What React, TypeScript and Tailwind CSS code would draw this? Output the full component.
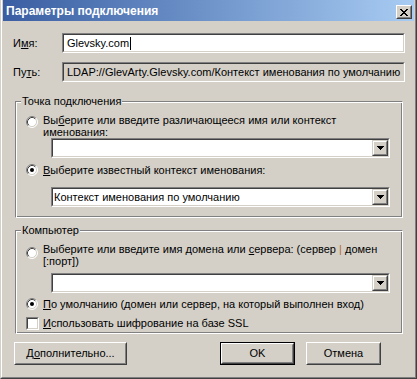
import React from "react";

function Radio({ checked }: { checked?: boolean }) {
  return (
    <svg width="12" height="12" viewBox="0 0 12 12" className="block shrink-0">
      <circle cx="6" cy="6" r="5" fill="#ffffff" />
      <path d="M2.11 9.89 A5.5 5.5 0 0 1 9.89 2.11" fill="none" stroke="#808080" />
      <path d="M9.89 2.11 A5.5 5.5 0 0 1 2.11 9.89" fill="none" stroke="#ffffff" />
      <path d="M2.82 9.18 A4.5 4.5 0 0 1 9.18 2.82" fill="none" stroke="#404040" />
      <path d="M9.18 2.82 A4.5 4.5 0 0 1 2.82 9.18" fill="none" stroke="#d4d0c8" />
      {checked && <circle cx="6" cy="6" r="2" fill="#000000" />}
    </svg>
  );
}

function Checkbox() {
  return (
    <div className="w-[13px] h-[13px] shrink-0 border border-t-[#808080] border-l-[#808080] border-r-white border-b-white">
      <div className="w-full h-full bg-white border border-t-[#404040] border-l-[#404040] border-r-[#d4d0c8] border-b-[#d4d0c8]" />
    </div>
  );
}

function Sunken({
  className,
  inner,
  children,
}: {
  className: string;
  inner: string;
  children?: React.ReactNode;
}) {
  return (
    <div className={"border border-t-[#808080] border-l-[#808080] border-r-white border-b-white " + className}>
      <div className={"w-full h-full border border-t-[#404040] border-l-[#404040] border-r-[#d4d0c8] border-b-[#d4d0c8] " + inner}>
        {children}
      </div>
    </div>
  );
}

function DropBtn() {
  return (
    <div className="w-[16px] h-[16px] shrink-0 border border-t-[#d4d0c8] border-l-[#d4d0c8] border-r-[#404040] border-b-[#404040]">
      <div className="w-full h-full bg-[#d4d0c8] border border-t-white border-l-white border-r-[#808080] border-b-[#808080] flex items-center justify-center">
        <svg width="7" height="4" viewBox="0 0 7 4" shapeRendering="crispEdges" className="block">
          <path d="M0 0h7v1H0zM1 1h5v1H1zM2 2h3v1H2zM3 3h1v1H3z" fill="#000000" />
        </svg>
      </div>
    </div>
  );
}

function Combo({ text }: { text?: string }) {
  return (
    <Sunken className="ml-[35px] w-[339px] h-[20px]" inner="bg-white flex items-center">
      <div className="flex-1 pl-[1px] whitespace-nowrap overflow-hidden">{text}</div>
      <DropBtn />
    </Sunken>
  );
}

function Group({
  label,
  className,
  children,
}: {
  label: string;
  className: string;
  children?: React.ReactNode;
}) {
  return (
    <div
      className={
        "relative ml-[12px] w-[388px] flex flex-col border border-t-[#808080] border-l-[#808080] border-r-white border-b-white shadow-[inset_1px_1px_0_#ffffff,inset_-1px_-1px_0_#808080] " +
        className
      }
    >
      <div className="absolute left-[5px] top-[-7px] bg-[#d4d0c8] px-[1px] leading-[13px] whitespace-nowrap">
        {label}
      </div>
      {children}
    </div>
  );
}

function Button({
  className,
  children,
  def,
}: {
  className: string;
  children: React.ReactNode;
  def?: boolean;
}) {
  if (def) {
    return (
      <div className={"h-[23px] border border-black " + className}>
        <div className="w-full h-full border border-t-white border-l-white border-r-[#404040] border-b-[#404040]">
          <div className="w-full h-full border border-t-[#d4d0c8] border-l-[#d4d0c8] border-r-[#808080] border-b-[#808080] flex items-center justify-center">
            {children}
          </div>
        </div>
      </div>
    );
  }
  return (
    <div className={"h-[23px] border border-t-white border-l-white border-r-[#404040] border-b-[#404040] " + className}>
      <div className="w-full h-full border border-t-[#d4d0c8] border-l-[#d4d0c8] border-r-[#808080] border-b-[#808080] flex items-center justify-center">
        {children}
      </div>
    </div>
  );
}

export default function App() {
  return (
    <div className="w-[417px] h-[379px] bg-[#d4d0c8] text-[11px] leading-[13px] text-black font-['Liberation_Sans',Arial,sans-serif]">
      <div className="w-full h-full border border-t-0 border-l-[#d4d0c8] border-r-[#404040] border-b-[#404040]">
        <div className="w-full h-full border border-t-0 border-l-white border-r-[#808080] border-b-[#808080] px-[1px] pb-[1px] flex flex-col">
          {/* Title bar */}
          <div className="h-[21px] shrink-0 flex items-start bg-linear-to-r from-[#3a5ea2] to-[#a8ccf2]">
            <div className="pl-[3px] pt-[4px] text-[12px] leading-[14px] font-bold text-white whitespace-nowrap flex-1">
              Параметры подключения
            </div>
            <div className="mt-[5px] mr-[2px] w-[16px] h-[14px] border border-t-white border-l-white border-r-[#404040] border-b-[#404040]">
              <div className="w-full h-full bg-[#d4d0c8] border border-t-[#d4d0c8] border-l-[#d4d0c8] border-r-[#808080] border-b-[#808080] flex items-center justify-center">
                <svg width="8" height="7" viewBox="0 0 8 7" shapeRendering="crispEdges" className="block">
                  <path
                    d="M0 0h2v1H0zM6 0h2v1H6zM1 1h2v1H1zM5 1h2v1H5zM2 2h4v1H2zM3 3h2v1H3zM2 4h4v1H2zM1 5h2v1H1zM5 5h2v1H5zM0 6h2v1H0zM6 6h2v1H6z"
                    fill="#000000"
                  />
                </svg>
              </div>
            </div>
          </div>

          {/* Name row */}
          <div className="mt-[12px] h-[20px] flex items-center">
            <div className="ml-[10px] w-[49px]">
              И<u>м</u>я:
            </div>
            <Sunken className="w-[343px] h-[20px]" inner="bg-white flex items-center pl-[3px]">
              <span className="whitespace-nowrap">Glevsky.com</span>
              <span className="ml-[1px] w-[1px] h-[13px] bg-black" />
            </Sunken>
          </div>

          {/* Path row */}
          <div className="mt-[9px] h-[20px] flex items-center">
            <div className="ml-[10px] w-[49px]">
              Пу<u>т</u>ь:
            </div>
            <Sunken className="w-[343px] h-[20px]" inner="bg-[#d4d0c8] flex items-center pl-[3px]">
              <span className="whitespace-nowrap">LDAP://GlevArty.Glevsky.com/Контекст именования по умолчанию</span>
            </Sunken>
          </div>

          {/* Group 1 */}
          <Group label="Точка подключения" className="mt-[19px] h-[117px]">
            <div className="mt-[12px] ml-[10px] flex items-start">
              <div className="mt-[2px]">
                <Radio />
              </div>
              <div className="ml-[5px] leading-[12px] whitespace-nowrap">
                Вы<u>б</u>ерите или введите различающееся имя или контекст
                <br />
                именования:
              </div>
            </div>
            <Combo />
            <div className="mt-[6px] ml-[10px] flex items-start">
              <Radio checked />
              <div className="ml-[5px] whitespace-nowrap">
                <u>В</u>ыберите известный контекст именования:
              </div>
            </div>
            <div className="mt-[10px]">
              <Combo text="Контекст именования по умолчанию" />
            </div>
          </Group>

          {/* Group 2 */}
          <Group label="Компьютер" className="mt-[12px] h-[104px]">
            <div className="mt-[12px] ml-[10px] flex items-start">
              <div className="mt-[4px]">
                <Radio />
              </div>
              <div className="ml-[5px] leading-[12px] whitespace-nowrap">
                Выберите или введите имя домена или <u>с</u>ервера: (сервер <span className="text-[#b8691f]">|</span> домен
                <br />
                [:порт])
              </div>
            </div>
            <div className="mt-[6px]">
              <Combo />
            </div>
            <div className="mt-[5px] ml-[10px] flex items-start">
              <Radio checked />
              <div className="ml-[5px] whitespace-nowrap">
                <u>П</u>о умолчанию (домен или сервер, на который выполнен вход)
              </div>
            </div>
            <div className="mt-[6px] ml-[10px] flex items-start">
              <Checkbox />
              <div className="ml-[4px] whitespace-nowrap">
                <u>И</u>спользовать шифрование на базе SSL
              </div>
            </div>
          </Group>

          {/* Buttons */}
          <div className="mt-[8px] flex">
            <Button className="ml-[11px] w-[113px]">
              <span>
                Д<u>о</u>полнительно...
              </span>
            </Button>
            <Button className="ml-[93px] w-[75px]" def>
              <span>OK</span>
            </Button>
            <Button className="ml-[11px] w-[75px]">
              <span>Отмена</span>
            </Button>
          </div>
        </div>
      </div>
    </div>
  );
}
